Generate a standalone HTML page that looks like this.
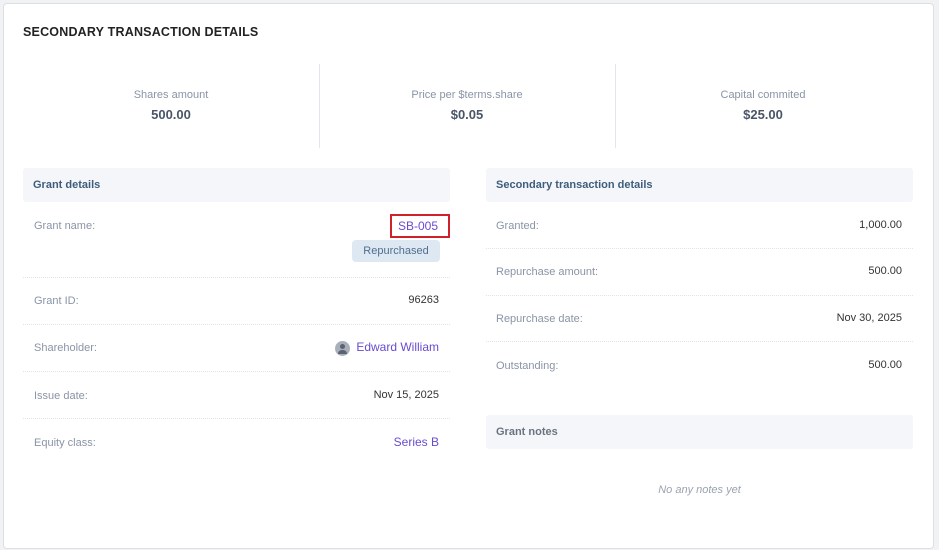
<!DOCTYPE html>
<html><head><style>
*{margin:0;padding:0;box-sizing:border-box}
body{width:939px;height:550px;background:#f1f2f4;font-family:"Liberation Sans",sans-serif;position:relative;overflow:hidden}
.card{position:absolute;left:3px;top:3px;width:931px;height:546px;background:#fff;border:1px solid #dcdfe4;border-radius:4px}
.a{position:absolute}
.t{left:23px;top:25px;font-size:12.5px;font-weight:bold;color:#222;letter-spacing:.2px}
.lab{font-size:11px;color:#8a94a6;text-align:center;width:296px}
.val{font-size:13px;font-weight:bold;color:#4a5568;text-align:center;width:296px}
.vl{width:1px;background:#e2e5ea;top:64px;height:84px}
.hd{background:#f4f6fa;height:34px;border-radius:3px;font-size:11px;font-weight:bold;color:#3e5d7a;padding:11px 10px}
.row{height:0;border-top:1px dotted #e0e3e8}
.k{font-size:11px;color:#8a94a6}
.v{font-size:11px;color:#333;text-align:right}
.p{color:#6a4bd0;font-size:12px}
</style></head><body>
<div class="card"></div>
<div class="a t">SECONDARY TRANSACTION DETAILS</div>
<div class="a lab" style="left:23px;top:89px">Shares amount</div>
<div class="a val" style="left:23px;top:107px">500.00</div>
<div class="a vl" style="left:319px"></div>
<div class="a lab" style="left:319px;top:89px">Price per $terms.share</div>
<div class="a val" style="left:319px;top:107px">$0.05</div>
<div class="a vl" style="left:615px"></div>
<div class="a lab" style="left:615px;top:89px">Capital commited</div>
<div class="a val" style="left:615px;top:107px">$25.00</div>

<div class="a hd" style="left:23px;top:168px;width:427px">Grant details</div>
<div class="a k" style="left:34px;top:220px">Grant name:</div>
<div class="a" style="left:390px;top:214px;width:60px;height:24px;border:2px solid #d0202a"></div>
<div class="a p" style="left:398px;top:219px">SB-005</div>
<div class="a" style="left:352px;top:240px;width:88px;height:22px;background:#dde8f3;border-radius:4px;font-size:11px;color:#4f6f8f;text-align:center;line-height:22px">Repurchased</div>
<div class="a row" style="left:23px;top:277px;width:427px"></div>
<div class="a k" style="left:34px;top:295px">Grant ID:</div>
<div class="a v" style="left:300px;top:294px;width:139px">96263</div>
<div class="a row" style="left:23px;top:324px;width:427px"></div>
<div class="a k" style="left:34px;top:342px">Shareholder:</div>
<div class="a" style="left:335px;top:341px;width:15px;height:15px;border-radius:50%;background:#a9b0bc;overflow:hidden"><div class="a" style="left:5px;top:3px;width:5px;height:5px;border-radius:50%;background:#5b6270"></div><div class="a" style="left:3px;top:9px;width:9px;height:4px;border-radius:4px 4px 0 0;background:#5b6270"></div></div>
<div class="a p" style="left:346px;top:340px;width:93px;text-align:right">Edward William</div>
<div class="a row" style="left:23px;top:371px;width:427px"></div>
<div class="a k" style="left:34px;top:390px">Issue date:</div>
<div class="a v" style="left:300px;top:389px;width:139px">Nov 15, 2025</div>
<div class="a row" style="left:23px;top:418px;width:427px"></div>
<div class="a k" style="left:34px;top:437px">Equity class:</div>
<div class="a p" style="left:300px;top:435px;width:139px;text-align:right">Series B</div>

<div class="a hd" style="left:486px;top:168px;width:427px">Secondary transaction details</div>
<div class="a k" style="left:496px;top:220px">Granted:</div>
<div class="a v" style="left:760px;top:219px;width:142px">1,000.00</div>
<div class="a row" style="left:486px;top:248px;width:427px"></div>
<div class="a k" style="left:496px;top:266px">Repurchase amount:</div>
<div class="a v" style="left:760px;top:265px;width:142px">500.00</div>
<div class="a row" style="left:486px;top:295px;width:427px"></div>
<div class="a k" style="left:496px;top:313px">Repurchase date:</div>
<div class="a v" style="left:760px;top:312px;width:142px">Nov 30, 2025</div>
<div class="a row" style="left:486px;top:341px;width:427px"></div>
<div class="a k" style="left:496px;top:360px">Outstanding:</div>
<div class="a v" style="left:760px;top:359px;width:142px">500.00</div>
<div class="a hd" style="left:486px;top:415px;width:427px;color:#6b7380">Grant notes</div>
<div class="a" style="left:486px;top:484px;width:427px;text-align:center;font-size:11px;font-style:italic;color:#9aa2b0">No any notes yet</div>
</body></html>
